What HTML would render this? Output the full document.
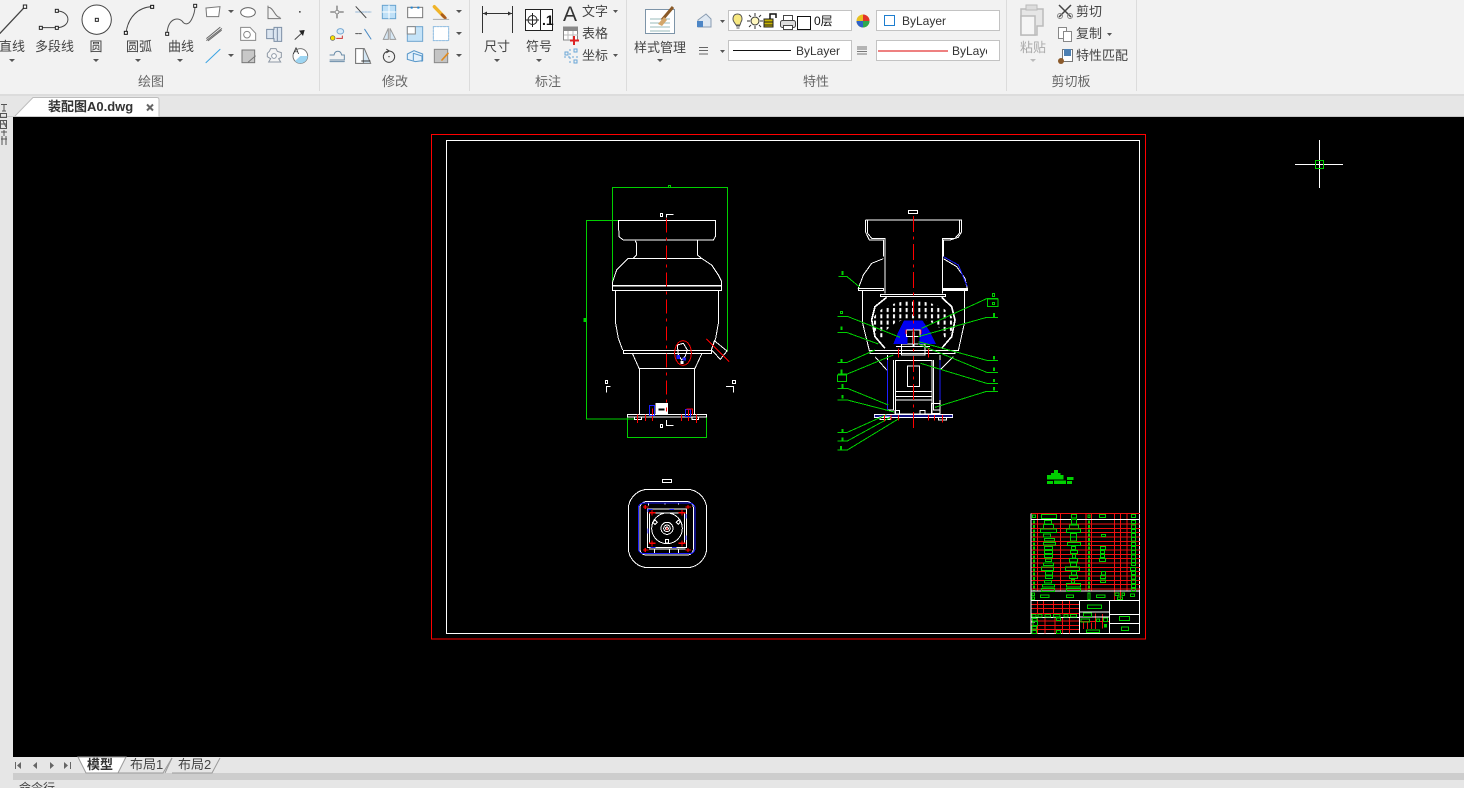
<!DOCTYPE html>
<html><head><meta charset="utf-8"><style>
html,body{margin:0;padding:0;background:#f2f2f2;overflow:hidden}
svg{display:block;position:absolute;left:0;top:0}
text{font-family:"Liberation Sans","Noto Sans CJK SC",sans-serif;font-size:13px;fill:#444}
.m{text-anchor:middle}
.g{fill:#666}
</style></head><body>
<svg width="1464" height="788" viewBox="0 0 1464 788" xmlns="http://www.w3.org/2000/svg">
<defs>
<pattern id="ticks" x="873" y="307" width="6.33" height="6.3" patternUnits="userSpaceOnUse"><rect x="1" y="1" width="2" height="4" fill="#fff"/></pattern>
<clipPath id="ball"><ellipse cx="913" cy="324" rx="41" ry="23"/></clipPath>
</defs>
<rect width="1464" height="788" fill="#f2f2f2"/>
<rect y="94" width="1464" height="2" fill="#dcdcdc"/>
<rect y="96" width="1464" height="21" fill="#e6e6e6"/>
<rect y="116" width="1464" height="1" fill="#c8c8c8"/>
<rect y="117" width="13" height="671" fill="#e6e6e6"/>
<rect x="13" y="117" width="1451" height="640" fill="#000"/>
<rect x="13" y="757" width="1451" height="31" fill="#e6e6e6"/>
<rect x="13" y="773" width="1451" height="7" fill="#cdcdcd"/>

<!-- separators -->
<g fill="#dcdcdc"><rect x="319" y="0" width="1" height="91"/><rect x="469" y="0" width="1" height="91"/><rect x="626" y="0" width="1" height="91"/><rect x="1006" y="0" width="1" height="91"/><rect x="1136" y="0" width="1" height="91"/></g>

<!-- ribbon labels -->
<text x="12" y="51" class="m">直线</text><text x="54.500" y="51" class="m">多段线</text><text x="96" y="51" class="m">圆</text><text x="139" y="51" class="m">圆弧</text><text x="181" y="51" class="m">曲线</text>
<text x="151" y="86" class="m g">绘图</text><text x="395" y="86" class="m g">修改</text><text x="548" y="86" class="m g">标注</text><text x="816" y="86" class="m g">特性</text><text x="1071" y="86" class="m g">剪切板</text>
<text x="497" y="51" class="m">尺寸</text><text x="539" y="51" class="m">符号</text><text x="582" y="16">文字</text><text x="582" y="38">表格</text><text x="582" y="60">坐标</text>
<text x="660" y="52" class="m">样式管理</text><text x="1033" y="52" class="m" style="fill:#aaa">粘贴</text>
<text x="1076" y="16">剪切</text><text x="1076" y="38">复制</text><text x="1076" y="60">特性匹配</text>

<!-- small dropdown arrows -->
<g fill="#555">
<path d="M9 59h6l-3 3zM93 59h6l-3 3zM135 59h6l-3 3zM177 59h6l-3 3zM228 10h6l-3 3zM228 54h6l-3 3zM456 10h6l-3 3zM456 32h6l-3 3zM456 54h6l-3 3z"/>
<path d="M494 59h6l-3 3zM536 59h6l-3 3zM613 10h5l-2.500 3zM613 54h5l-2.500 3zM657 59h6l-3 3zM720 20h5l-2.500 3zM720 50h5l-2.500 3zM1107 33h5l-2.500 3z"/>
<path d="M842 20h5l-2.500 3zM842 49h5l-2.500 3zM990 20h5l-2.500 3zM990 49h5l-2.500 3z" fill="#888"/>
<path d="M1030 59h6l-3 3z" fill="#bbb"/>
</g>

<!-- Draw/modify icons in 3x coordinates -->
<g transform="scale(.33333)" fill="none" stroke-linecap="round">
<path d="M0 100L75 20" stroke="#444" stroke-width="4"/><rect x="70" y="15" width="10" height="10" stroke="#222" stroke-width="3" fill="#fff"/>
<path d="M170 33C215 33 215 83 170 83H122" stroke="#444" stroke-width="3"/><g stroke="#222" stroke-width="3" fill="#fff"><rect x="166" y="28" width="9" height="9"/><rect x="166" y="79" width="9" height="9"/><rect x="118" y="79" width="9" height="9"/></g>
<circle cx="290" cy="59" r="44" stroke="#444" stroke-width="3" fill="#fff"/><rect x="286" y="55" width="9" height="9" stroke="#222" stroke-width="3" fill="#fff"/>
<path d="M378 98C385 50 415 22 456 20" stroke="#444" stroke-width="3"/><rect x="373" y="94" width="9" height="9" stroke="#111" stroke-width="3" fill="#fff"/><rect x="452" y="16" width="9" height="9" stroke="#111" stroke-width="3" fill="#fff"/>
<path d="M501 100C505 50 540 50 550 68C570 85 585 40 585 18" stroke="#555" stroke-width="3"/><rect x="497" y="97" width="9" height="9" stroke="#222" stroke-width="3" fill="#fff"/><rect x="581" y="13" width="9" height="9" stroke="#222" stroke-width="3" fill="#fff"/>
<path d="M618 24L660 20L656 50H620Z" stroke="#777" stroke-width="3" fill="#fff"/>
<ellipse cx="744" cy="37" rx="22" ry="14" stroke="#666" stroke-width="3" fill="#fff"/>
<path d="M804 18V56H842M806 22C820 22 825 52 840 52" stroke="#777" stroke-width="3"/>
<rect x="897" y="33" width="5" height="5" fill="#555"/>
<path d="M620 115L660 82M620 121L665 86M625 122L664 91" stroke="#666" stroke-width="3"/>
<path d="M722 82H750L767 100V121H722Z" stroke="#888" stroke-width="3" fill="#fff"/><circle cx="741" cy="104" r="10" stroke="#888" stroke-width="3"/>
<path d="M800 88H822V82H845V124H822V116H800Z" stroke="#7c8ea5" stroke-width="3" fill="#dbe5f0"/><path d="M820 88V116M832 84V122" stroke="#7c8ea5" stroke-width="3"/>
<path d="M885 118L910 95" stroke="#444" stroke-width="3"/><path d="M897 92L914 90L909 108Z" fill="#222"/>
<path d="M618 188L660 148" stroke="#3aa3e3" stroke-width="3"/>
<rect x="726" y="150" width="38" height="38" fill="#c8c8c8" stroke="#777" stroke-width="3"/><path d="M745 186L766 168" stroke="#777" stroke-width="3"/>
<path d="M812 146H828L832 154L844 158V172L836 176L842 186H806L812 176L802 170V160L808 154Z" stroke="#8e98a5" stroke-width="3" fill="#f4f4f4"/><circle cx="822" cy="168" r="7" stroke="#8e98a5" stroke-width="3" fill="#fff"/>
<circle cx="901" cy="168" r="22" stroke="#777" stroke-width="3" fill="#fff"/><path d="M901 168H923A22 22 0 0 1 885 183L901 168Z" fill="#9dd5f2"/>
<!-- modify -->
<g stroke="#555" stroke-width="3"><path d="M1011 18V30M1011 42V54M992 36H1004M1018 36H1030"/></g><rect x="1007" y="32" width="9" height="9" stroke="#888" stroke-width="2"/>
<path d="M1067 36H1113" stroke="#90b4d5" stroke-width="3" stroke-dasharray="6 3"/><path d="M1068 20L1098 53" stroke="#444" stroke-width="3"/>
<rect x="1147" y="16" width="40" height="40" fill="#bfe0f7" stroke="#67a3cf" stroke-width="3"/><path d="M1167 16V56M1147 36H1187" stroke="#fff" stroke-width="3"/>
<rect x="1223" y="22" width="45" height="31" stroke="#777" stroke-width="3" fill="#fff"/><path d="M1232 20h6v6h-6zM1252 20h6v6h-6z" fill="#1d84d4" stroke="none"/>
<path d="M1303 20L1332 50" stroke="#f0b429" stroke-width="10"/><path d="M1326 44L1336 54" stroke="#a85a1e" stroke-width="8"/><path d="M1300 58H1346" stroke="#aaa" stroke-width="3"/>
<circle cx="998" cy="114" r="7" fill="#f8e000" stroke="#555" stroke-width="2"/><ellipse cx="1021" cy="94" rx="10" ry="8" stroke="#76a8d2" stroke-width="3" fill="#d8ebf9"/><path d="M1010 115H1027V108" stroke="#c33" stroke-width="3"/>
<path d="M1067 101H1086" stroke="#555" stroke-width="3" stroke-dasharray="7 3"/><path d="M1094 88L1113 117" stroke="#4a8ac4" stroke-width="3"/>
<path d="M1165 85V118H1150ZM1170 85V118H1187Z" stroke="#999" stroke-width="3" fill="#d7e8f5"/>
<rect x="1222" y="80" width="46" height="44" fill="#c5e3f8" stroke="#6fa5cf" stroke-width="3"/><rect x="1222" y="80" width="24" height="22" fill="#fff" stroke="#888" stroke-width="3"/>
<rect x="1300" y="80" width="46" height="42" fill="#fff" stroke="#8dbbe0" stroke-width="3" stroke-dasharray="7 3"/>
<path d="M990 180H1033V165H1025C1022 150 1005 150 1002 165H990M990 185H1033" stroke="#6a8ca8" stroke-width="3"/>
<path d="M1067 146H1093L1112 190H1067Z" stroke="#777" stroke-width="3" fill="#d4e7f5"/><path d="M1067 146H1090V190H1067Z" fill="#fff" stroke="#777" stroke-width="3"/><path d="M1085 183H1110" stroke="#333" stroke-width="3"/>
<circle cx="1167" cy="170" r="17" stroke="#444" stroke-width="3"/><path d="M1160 148L1168 153L1160 158" stroke="#444" stroke-width="3"/><circle cx="1167" cy="170" r="2" fill="#444"/>
<path d="M1222 162L1242 152L1268 162V182L1246 185L1222 178Z" stroke="#5897c9" stroke-width="3" fill="#e4f1fb"/><path d="M1240 160L1266 168V184M1240 160V180" stroke="#5897c9" stroke-width="3"/>
<rect x="1303" y="148" width="40" height="40" fill="#c4c4c4" stroke="#888" stroke-width="3"/><path d="M1326 180L1344 160" stroke="#e08a1e" stroke-width="5"/>
</g>
<text x="293" y="54" style="font-size:9px;fill:#333">A</text>

<!-- Annotation icons -->
<g fill="none">
<path d="M482.500 6V33M512.500 6V33M483 13.500H512" stroke="#333"/><path d="M483 13.500l4-2v4zM512 13.500l-4-2v4z" fill="#333"/>
<rect x="525.500" y="9.500" width="27" height="21" stroke="#222" fill="#fff"/><path d="M540.500 10V30" stroke="#222"/><circle cx="532.500" cy="20" r="4.500" stroke="#222"/><path d="M526 20H539M532.500 13V27" stroke="#222"/>
<rect x="563.500" y="27" width="14" height="13" stroke="#888" fill="#fff"/><path d="M564 27h14v4h-14z" fill="#888"/><path d="M568 31V40M573 31V40M564 35H578" stroke="#bbb"/><path d="M574 36v9M570 40.500h9" stroke="#d22" stroke-width="2"/>
<path d="M565 52h3v3h-3zM574 49h3v3h-3zM574 60h3v3h-3z" stroke="#6aa6d6"/><path d="M570 49V63M564 57H578" stroke="#6aa6d6" stroke-dasharray="2 2"/>
</g>
<text x="563" y="21" style="font-size:21px;fill:#333">A</text>
<text x="542" y="25" style="font-size:14px;font-weight:bold;fill:#111">.1</text>

<!-- Style manager -->
<rect x="645.500" y="9.500" width="29" height="24" fill="#fff" stroke="#7d94a8"/>
<path d="M650 19H670M650 23H670M650 27H670M650 31H670" stroke="#9bb" stroke-width="1"/>
<path d="M662 20L673 7" stroke="#8a5a28" stroke-width="3"/><path d="M658 24L664 17L667 20L662 26Z" fill="#d4a66a"/>

<!-- Layer area -->
<g fill="none">
<path d="M698 20L706 14L711 19V27H698Z" stroke="#8a9cb1" fill="#dfe8f2"/><rect x="697" y="21" width="6" height="6" fill="#4d86c6"/>
<path d="M699 47.500H708M699 50.500H708M699 54H708" stroke="#666"/>
<rect x="728.500" y="10.500" width="123" height="20" fill="#fff" stroke="#c3c3c3"/>
<rect x="876.500" y="10.500" width="123" height="20" fill="#fff" stroke="#c3c3c3"/>
<rect x="728.500" y="40.500" width="123" height="20" fill="#fff" stroke="#c3c3c3"/>
<rect x="876.500" y="40.500" width="123" height="20" fill="#fff" stroke="#c3c3c3"/>
<path d="M737.500 14C733 14 732 19 734 22L736 25H740L741 22C743 19 742 14 737.500 14Z" fill="#f7e880" stroke="#555"/><path d="M736 26H740M736.500 28H739.500" stroke="#555"/>
<circle cx="755" cy="21" r="4" stroke="#333" fill="#fff8c0"/><path d="M755 13V16M755 26V29M747 21H750M760 21H763M749 15L751 17M759 25L761 27M761 15L759 17M751 25L749 27" stroke="#333"/>
<rect x="764" y="19" width="9" height="8" fill="#c8b400" stroke="#222"/><path d="M764 22H773M764 25H773" stroke="#222"/><path d="M770 19V14H776V18" stroke="#111" stroke-width="1.500"/>
<rect x="780.500" y="20.500" width="15" height="7" rx="2" fill="#ddd" stroke="#444"/><rect x="783.500" y="15.500" width="9" height="5" fill="#fff" stroke="#444"/><rect x="783.500" y="25.500" width="9" height="4" fill="#fff" stroke="#444"/>
<rect x="797.500" y="16.500" width="13" height="13" fill="#fff" stroke="#111"/>
<rect x="884.500" y="15.500" width="10" height="10" stroke="#1e7ecf" fill="#fff"/>
<path d="M733 50.500H791" stroke="#111"/><path d="M878 51H948" stroke="#d00"/>
<path d="M857 47H867M857 49H867M857 51.500H867M857 54H867" stroke="#777"/>
</g>
<circle cx="863" cy="21" r="6.500" fill="#e8c020"/><path d="M863 21V14.500A6.500 6.500 0 0 1 869.500 21Z" fill="#e2342a"/><path d="M863 21H869.500A6.500 6.500 0 0 1 863 27.500Z" fill="#2fa84f"/><path d="M863 21V27.500A6.500 6.500 0 0 1 856.500 21Z" fill="#2f62c8"/>
<text x="814" y="25" style="font-size:12px;fill:#111">0层</text>
<text x="902" y="25" style="font-size:12px;fill:#333">ByLayer</text>
<text x="796" y="55" style="font-size:12px;fill:#333">ByLayer</text>
<svg x="950" y="40" width="37" height="20"><text x="2" y="15" style="font-size:12px;fill:#333">ByLayer</text></svg>

<!-- Clipboard icons -->
<g fill="none">
<path d="M1021 9H1043V26H1037V35H1021Z" stroke="#bbb" fill="#e6e6e6" stroke-width="1.500"/><rect x="1026" y="5" width="11" height="5" stroke="#bbb" fill="#ddd"/><path d="M1021 16H1035V35H1021Z" stroke="#bbb" fill="#f5f5f5" stroke-width="1.500"/>
<path d="M1059 5L1071 17M1071 5L1059 17" stroke="#444" stroke-width="1.500"/><circle cx="1060" cy="16" r="2.500" stroke="#888"/><circle cx="1070" cy="16" r="2.500" stroke="#888"/>
<rect x="1058.500" y="27.500" width="8" height="11" fill="#fff" stroke="#888"/><rect x="1063.500" y="31.500" width="8" height="10" fill="#fff" stroke="#888"/>
<rect x="1062.500" y="49.500" width="10" height="12" fill="#fff" stroke="#777"/><rect x="1064" y="49" width="7" height="7" fill="#4d80b3"/><circle cx="1061" cy="61" r="3" fill="#8b5a2b"/>
</g>

<!-- document tab -->
<path d="M15 116L33 97.500H157Q159 97.500 159 100V116.500" fill="#fff" stroke="#bdbdbd"/>
<text x="48" y="111" style="font-weight:bold;fill:#333">装配图A0.dwg</text>
<path d="M147 104.500L153 110.500M153 104.500L147 110.500" stroke="#666" stroke-width="2"/>
<!-- side strip -->
<g stroke="#555" fill="none"><path d="M1 104.500H7M4 104.500V111M2 111H6"/><rect x="0.500" y="113.500" width="6" height="4"/><rect x="0.500" y="120.500" width="6" height="8"/><path d="M1 124H7M3 121L6 127"/><path d="M1 132H7M4 130V136M1 139H7M2 136V145M6 136V145"/></g>

<!-- CAD drawing -->
<g shape-rendering="crispEdges">
<!-- Drawing frame -->
<rect x="431.500" y="134.500" width="714" height="504.500" fill="none" stroke="#ff0000"/>
<rect x="446.500" y="140.500" width="693" height="493" fill="none" stroke="#fff"/>
<!-- crosshair -->
<path d="M1295 164.500H1343M1319.500 140V188" stroke="#fff"/><rect x="1315.500" y="160.500" width="8" height="8" fill="none" stroke="#00d000"/>

<!-- LEFT VIEW -->
<g transform="translate(570 175) scale(.33333)" fill="none" stroke-width="3">
<g stroke="#00d000">
<path d="M127 345V37H472V530"/><rect x="295" y="31" width="6" height="6"/>
<path d="M147 136H49V732H195"/><path d="M42 430h6v10h-6z" fill="#00d000"/>
<path d="M172 725V787H409V725"/>
</g>
<g stroke="#fff">
<path d="M145 136H437V183L430 195H160L147 185Z"/>
<path d="M195 197L200 205V240L190 250M383 197L382 240L395 250"/>
<path d="M175 250H395L425 270L445 300L455 320V347H128V320L140 285L160 265Z"/><path d="M128 332H455" stroke-width="5"/>
<path d="M136 347V440L145 490L158 525M446 347V440L437 490L424 525"/>
<rect x="160" y="526" width="264" height="10"/>
<path d="M188 537L207 580H375L395 537"/><path d="M208 580V718M374 580V718"/>
<rect x="172" y="718" width="238" height="8"/>
<path d="M193 727V733H215V727M366 727V733H386V727"/>
<path d="M424 524L433 497L471 528L451 553Z"/>
<rect x="271" y="115" width="7" height="10"/><path d="M289 127V118H311"/>
<rect x="106" y="616" width="7" height="10"/><path d="M109 653V634H122"/>
<rect x="487" y="616" width="9" height="10"/><path d="M491 653V634H468"/>
<rect x="271" y="748" width="7" height="10"/><path d="M289 735V751H311"/>
</g>
<path d="M258 686H292V716H258Z" fill="#fff" stroke="#fff"/><path d="M265 700H283V706H265Z" fill="#000" stroke="none"/>
<path d="M322 510L340 505L352 525L345 545L335 555L325 540Z" stroke="#fff"/><rect x="320" y="540" width="10" height="12" fill="#1e1eff" stroke="none"/><rect x="338" y="548" width="10" height="8" fill="#1e1eff" stroke="none"/><rect x="332" y="558" width="9" height="9" fill="#fff" stroke="none"/>
<path d="M289 130V710" stroke="#ff0000" stroke-width="3" stroke-dasharray="42 15 9 15"/>
<ellipse cx="339" cy="534" rx="25" ry="37" stroke="#ff0000"/>
<path d="M409 492L478 560" stroke="#ff0000"/>
<path d="M202 718V744M226 718V738M247 700V738M334 718V738M356 700V738M380 718V744" stroke="#ff0000"/>
<rect x="239" y="692" width="15" height="30" stroke="#1e1eff"/><rect x="347" y="704" width="14" height="20" stroke="#1e1eff"/>
<path d="M350 702H368V720" stroke="#ff0000"/>
</g>

<!-- Ball ticks (under right view) -->
<rect x="872" y="301" width="84" height="46" fill="url(#ticks)" clip-path="url(#ball)"/>
<ellipse cx="914" cy="338" rx="30" ry="19" fill="#000"/>

<!-- RIGHT VIEW -->
<g transform="translate(830 200) scale(.33333)" fill="none" stroke-width="3">
<g stroke="#fff">
<rect x="235" y="31" width="28" height="10"/>
<path d="M106 60H395V95L385 112L360 120H340V170M106 60V95L118 120H160V170"/>
<path d="M113 62V100L125 115H165V280M388 62V100L375 115H337V280"/>
<path d="M160 176L125 190L100 225L85 265H160M340 176L380 200L405 235L412 268H340"/>
<rect x="85" y="265" width="75" height="6"/><rect x="340" y="265" width="72" height="6"/>
<rect x="152" y="283" width="195" height="7"/>
<path d="M98 272V370L118 452H155M403 272V370L385 452H340"/>
<path d="M170 292L135 320L125 360L135 410L165 445M335 292L365 320L375 360L365 410L335 445" stroke-width="5"/>
<path d="M120 452H375V460H120Z"/>
<path d="M172 465V630H190V480M330 465V630H310V480"/>
<rect x="196" y="482" width="110" height="160"/>
<rect x="232" y="498" width="37" height="61"/>
<path d="M198 575H304M198 590H304M198 600H304"/>
<path d="M135 470L170 510M370 470L330 510"/>
<path d="M198 440H300M215 465H285V432H215Z"/>
<rect x="150" y="650" width="30" height="8"/><rect x="270" y="632" width="15" height="12"/><rect x="195" y="632" width="14" height="12"/>
<rect x="305" y="610" width="25" height="30"/>
<rect x="133" y="644" width="234" height="8"/>
<path d="M325 652V660H350V652"/>
</g>
<path d="M133 648H367" stroke="#1e1eff" stroke-width="3"/>
<path d="M222 362H278L300 395L318 432H268V405H232V432H190L205 395Z" fill="#0000f0" stroke="none"/>
<path d="M230 390H270V410H230Z" fill="#000" stroke="#fff"/>
<path d="M250 395V440" stroke="#fff" stroke-width="6"/>
<path d="M340 170L385 195L412 260M172 480V630M330 480V600" stroke="#1e1eff"/>
<g stroke="#00d000">
<path d="M25 229H50L90 262M22 349H52L210 412M22 398H52L145 432M22 487H52L135 450M24 522H52L190 465M22 565H52L175 615M22 600H52L192 636M22 697H52L170 644M22 723H52L185 650M22 750H52L208 655"/>
<path d="M504 295H472L275 385M504 352H470L265 410M504 481H470L265 425M504 517H470L265 432M504 550H470L272 490M504 574H470L315 622"/>
<rect x="22" y="525" width="28" height="20"/><rect x="472" y="297" width="32" height="22"/>
<rect x="31" y="335" width="6" height="6"/><rect x="487" y="281" width="6" height="8"/><rect x="487" y="307" width="6" height="6"/>
<path d="M37 213V225M34 380V390M34 477V487M35 508V520M37 552V564M37 585V596M37 687V696M37 712V722M33 738V748M492 339V351M492 468V478M492 502V513M492 537V546M492 561V571" stroke-width="6"/>
</g>
<path d="M205 445V473M295 445V473M163 645V665M183 645V660M205 645V662M295 645V662M313 645V662M338 645V668M228 388V402M273 388V402" stroke="#ff0000"/>
<path d="M250 48V686" stroke="#ff0000" stroke-width="3" stroke-dasharray="48 14 8 14"/>
</g>

<!-- TOP VIEW -->
<g transform="translate(615 475) scale(.33333)" fill="none" stroke-width="3">
<g stroke="#fff">
<rect x="142" y="13" width="27" height="9"/>
<rect x="40" y="43" width="235" height="235" rx="60"/>
<rect x="75" y="80" width="160" height="160" rx="18"/>
<rect x="98" y="102" width="116" height="116"/>
<path d="M104 205V114H208V205M102 222H212"/>
<circle cx="156" cy="160" r="46"/><circle cx="156" cy="160" r="18"/><circle cx="156" cy="160" r="10"/><circle cx="156" cy="160" r="4"/>
<rect x="152" y="193" width="8" height="11"/><rect x="116" y="137" width="9" height="9" transform="rotate(45 120 141)"/><rect x="186" y="137" width="9" height="9" transform="rotate(45 190 141)"/>
<path d="M118 222V234M163 222V234M190 222V234M100 85V92M150 82V88M190 82V88"/>
</g>
<rect x="70" y="84" width="170" height="152" rx="16" stroke="#1e1eff"/>
<rect x="99" y="103" width="114" height="114" stroke="#1e1eff" stroke-dasharray="14 50"/>
<path d="M84 96H100M91 90V102M212 96H228M219 90V102M84 225H100M91 219V231M212 225H228M219 219V231M102 113H122M111 105V122M190 113H212M201 105V122M102 205H122M111 197V214M190 205H212M201 197V214M156 158V166" stroke="#ff0000" stroke-width="4"/>
</g>

<!-- TITLE BLOCK -->
<g transform="translate(1025 465) scale(.33333)" fill="none" stroke-width="3">
<g fill="#00d000" stroke="none"><rect x="87" y="15" width="12" height="10"/><rect x="78" y="24" width="28" height="8"/><rect x="66" y="30" width="50" height="14"/><rect x="66" y="48" width="18" height="9"/><rect x="87" y="46" width="36" height="11"/><rect x="126" y="36" width="20" height="9"/><rect x="126" y="48" width="15" height="9"/></g>
<g stroke="#f01010">
<path d="M18 145H345M18 177H345M18 190H345M18 203H345M18 216H345M18 229H345M18 242H345M18 255H345M18 268H345M18 281H345M18 294H345M18 307H345M18 320H345M18 333H345M18 346H345M18 359H345M18 372H345"/>
<path d="M38 145V378M106 145V378M183 145V378M199 145V378M268 145V405M286 145V405M306 145V378"/>
<path d="M38 406V448M55 406V448M85 406V448M112 406V448M133 406V448M38 458V505M60 458V505M90 458V505M112 458V505M133 458V505"/>
<path d="M18 418H165M18 431H165M18 445H165M18 468H165M18 481H165M18 494H165M165 470H253M175 473V492M188 473V492M200 473V492M212 445V492M232 447V490"/>
</g>
<g stroke="#fff">
<path d="M18 145V505M18 163H343M18 378H343M18 406H343M163 406V505M253 406V505M163 441H253M163 456H253M253 448H343M253 475H343M18 457H163M18 471H30"/>
</g>
<g stroke="#00d000">
<rect x="23" y="150" width="8" height="8"/><rect x="49" y="148" width="46" height="13"/><rect x="139" y="148" width="16" height="11"/><rect x="189" y="150" width="6" height="8"/><rect x="223" y="148" width="19" height="10"/><rect x="319" y="148" width="13" height="10"/>
<path d="M27 167V376M192 167V376" stroke-width="5" stroke-dasharray="9 4"/>
<rect x="58" y="166" width="22" height="11"/><rect x="55" y="179" width="30" height="13"/><rect x="46" y="192" width="49" height="11"/><rect x="55" y="207" width="22" height="9"/><rect x="58" y="220" width="30" height="8"/><rect x="55" y="232" width="37" height="8"/><rect x="58" y="244" width="25" height="10"/><rect x="58" y="256" width="25" height="10"/><rect x="58" y="268" width="25" height="10"/><rect x="61" y="282" width="19" height="8"/><rect x="55" y="294" width="31" height="8"/><rect x="49" y="306" width="37" height="11"/><rect x="61" y="319" width="22" height="11"/><rect x="61" y="333" width="22" height="8"/><rect x="58" y="346" width="22" height="8"/><rect x="52" y="358" width="37" height="8"/><rect x="49" y="370" width="40" height="10"/>
<rect x="139" y="163" width="16" height="14"/><rect x="133" y="180" width="28" height="12"/><rect x="124" y="192" width="43" height="11"/><rect x="136" y="205" width="19" height="11"/><rect x="136" y="216" width="19" height="12"/><rect x="127" y="232" width="40" height="10"/><rect x="139" y="244" width="13" height="10"/><rect x="136" y="256" width="22" height="10"/><rect x="142" y="268" width="10" height="11"/><rect x="133" y="280" width="25" height="11"/><rect x="136" y="294" width="19" height="10"/><rect x="121" y="306" width="43" height="11"/><rect x="139" y="319" width="16" height="11"/><rect x="133" y="332" width="25" height="9"/><rect x="139" y="343" width="10" height="11"/><rect x="124" y="356" width="43" height="10"/><rect x="124" y="370" width="43" height="10"/>
<rect x="229" y="208" width="13" height="7"/><rect x="226" y="244" width="16" height="10"/><rect x="226" y="256" width="13" height="10"/><rect x="226" y="268" width="13" height="10"/><rect x="223" y="280" width="19" height="10"/><rect x="229" y="319" width="13" height="11"/><rect x="226" y="332" width="16" height="9"/><rect x="226" y="345" width="16" height="8"/>
<rect x="319" y="166" width="13" height="10"/><rect x="319" y="180" width="13" height="10"/><rect x="319" y="193" width="13" height="10"/><rect x="319" y="206" width="13" height="10"/><rect x="319" y="218" width="13" height="10"/><rect x="319" y="232" width="13" height="10"/><rect x="319" y="245" width="13" height="10"/><rect x="319" y="257" width="13" height="10"/><rect x="319" y="270" width="13" height="10"/><rect x="319" y="282" width="13" height="10"/><rect x="319" y="294" width="13" height="8"/><rect x="316" y="307" width="16" height="10"/><rect x="319" y="319" width="13" height="10"/><rect x="319" y="332" width="13" height="10"/><rect x="319" y="345" width="13" height="10"/><rect x="319" y="358" width="13" height="10"/><rect x="319" y="370" width="13" height="10"/>
<rect x="21" y="384" width="8" height="8"/><rect x="21" y="396" width="8" height="8"/><rect x="46" y="390" width="26" height="8"/><rect x="124" y="390" width="22" height="8"/><rect x="189" y="384" width="6" height="20"/><rect x="214" y="390" width="26" height="8"/><rect x="270" y="384" width="12" height="8"/><rect x="291" y="384" width="8" height="8"/><rect x="277" y="396" width="16" height="8"/><rect x="316" y="387" width="13" height="8"/>
<rect x="187" y="420" width="43" height="11"/><rect x="175" y="444" width="25" height="11"/><rect x="168" y="462" width="26" height="9"/><rect x="214" y="462" width="10" height="8"/><rect x="235" y="459" width="13" height="11"/><rect x="239" y="478" width="5" height="8" fill="#00d000"/><rect x="184" y="495" width="40" height="8"/>
<rect x="283" y="454" width="31" height="13"/><rect x="289" y="486" width="22" height="11"/>
<rect x="21" y="448" width="12" height="8"/><rect x="39" y="448" width="12" height="8"/><rect x="60" y="448" width="17" height="8"/><rect x="85" y="448" width="20" height="8"/><rect x="117" y="448" width="12" height="8"/><rect x="136" y="448" width="19" height="8"/>
<rect x="23" y="460" width="13" height="8"/><rect x="94" y="459" width="13" height="8"/><rect x="24" y="470" width="14" height="11"/><rect x="21" y="484" width="14" height="8"/><rect x="21" y="496" width="14" height="9"/><rect x="94" y="496" width="13" height="9"/>
</g>
</g>
</g>

<!-- bottom tabs -->
<g fill="#666"><rect x="15" y="762" width="1" height="7"/><path d="M21 762v7l-4-3.500zM37 762v7l-4-3.500zM50 762v7l4-3.500zM64 762v7l4-3.500z"/><rect x="70" y="762" width="1" height="7"/></g>
<path d="M78 757L86 773H118L126 757Z" fill="#fff" stroke="#9a9a9a"/>
<path d="M118 773H163L172 758" fill="none" stroke="#9a9a9a"/>
<path d="M172 773H212L220 758M165 773L172 758" fill="none" stroke="#9a9a9a"/>
<text x="87" y="769" style="font-weight:bold;fill:#333">模型</text>
<text x="130" y="769">布局1</text>
<text x="178" y="769">布局2</text>
<svg x="19" y="780" width="60" height="8"><text x="0" y="12" style="font-size:12px;fill:#444">命令行</text></svg>
</svg>
</body></html>
